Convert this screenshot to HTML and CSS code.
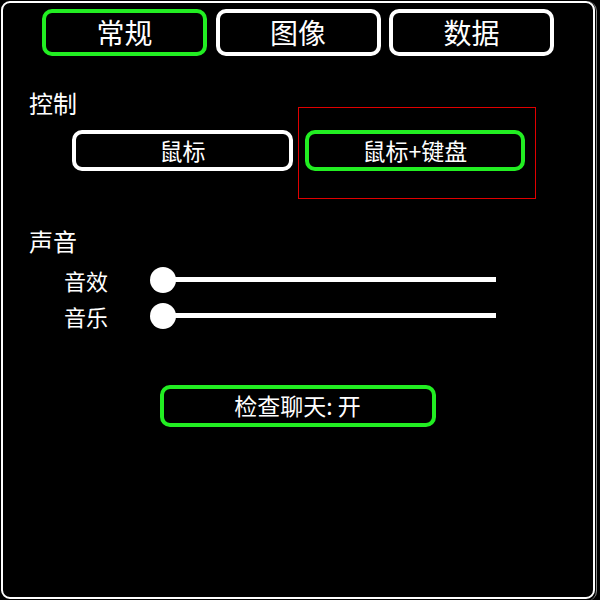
FILE: index.html
```html
<!DOCTYPE html>
<html lang="zh">
<head>
<meta charset="utf-8">
<title>设置</title>
<link rel="stylesheet" href="styles.css">
</head>
<body>
<div class="frame">
  <div class="panel">
    <div class="tabs">
      <div class="tab active">常规</div>
      <div class="tab">图像</div>
      <div class="tab">数据</div>
    </div>

    <div class="section-title">控制</div>
    <div class="controls">
      <div class="btn">鼠标</div>
      <div class="focus-wrap">
        <div class="btn btn-wide active">鼠标+键盘</div>
        <div class="focus-ring"></div>
      </div>
    </div>

    <div class="section-title sound-title">声音</div>
    <div class="slider-row">
      <div class="slider-label">音效</div>
      <div class="slider">
        <div class="track"></div>
        <div class="knob"></div>
      </div>
    </div>
    <div class="slider-row">
      <div class="slider-label">音乐</div>
      <div class="slider">
        <div class="track"></div>
        <div class="knob"></div>
      </div>
    </div>

    <div class="chat-row">
      <div class="btn chat active">检查聊天: 开</div>
    </div>
  </div>
</div>
</body>
</html>
```

FILE: styles.css
```css
html, body {
  margin: 0;
  padding: 0;
  background: #000;
}

body {
  width: 600px;
  height: 600px;
  overflow: hidden;
  font-family: "Noto Sans CJK SC", "Noto Sans", sans-serif;
  color: #fff;
}

.frame {
  width: 597px;
  height: 600px;
  box-sizing: border-box;
  border-right: 1px solid #8a8a8a;
  border-radius: 0 10px 10px 0;
}

.panel {
  margin: 1px 0 0 1px;
  width: 594px;
  height: 598px;
  box-sizing: border-box;
  border: 2px solid #fff;
  border-radius: 9px;
  background: #000;
}

.tabs {
  display: flex;
  gap: 8.5px;
  padding: 6px 0 0 39px;
}

.tab {
  width: 165px;
  height: 47px;
  box-sizing: border-box;
  border: 4px solid #fff;
  border-radius: 10px;
  display: flex;
  align-items: center;
  justify-content: center;
  font-size: 28px;
  line-height: 1;
  padding-bottom: 2px;
}

.active {
  border-color: #22ee22;
}

.section-title {
  margin: 35px 0 0 26px;
  font-size: 24px;
  line-height: 24px;
  height: 24px;
}

.controls {
  display: flex;
  gap: 12px;
  margin: 15px 0 0 69px;
}

.btn {
  width: 221px;
  height: 41px;
  box-sizing: border-box;
  border: 4px solid #fff;
  border-radius: 10px;
  display: flex;
  align-items: center;
  justify-content: center;
  font-size: 23px;
  line-height: 1;
  padding-bottom: 1px;
}

.btn.active {
  border-color: #22ee22;
}

.btn-wide {
  width: 220px;
}

.focus-wrap {
  position: relative;
}

.focus-ring {
  position: absolute;
  left: -7px;
  top: -23px;
  width: 238px;
  height: 92px;
  box-sizing: border-box;
  border: 1px solid #e00000;
  pointer-events: none;
}

.sound-title {
  margin-top: 58px;
}

.slider-row {
  display: flex;
  align-items: center;
  height: 36px;
  margin-left: 61px;
}

.sound-title + .slider-row {
  margin-top: 9px;
}

.slider-label {
  width: 86px;
  flex-shrink: 0;
  font-size: 22px;
  line-height: 1;
  padding-bottom: 1px;
}

.slider {
  position: relative;
  width: 346px;
  height: 26px;
}

.track {
  margin: 10px 0 0 13px;
  height: 5px;
  background: #fff;
}

.knob {
  position: absolute;
  left: 0;
  top: 0;
  width: 26px;
  height: 26px;
  border-radius: 50%;
  background: #fff;
}

.chat-row {
  display: flex;
  justify-content: center;
  margin-top: 51px;
  padding-right: 1px;
}

.btn.chat {
  width: 276px;
  height: 42px;
}
```
